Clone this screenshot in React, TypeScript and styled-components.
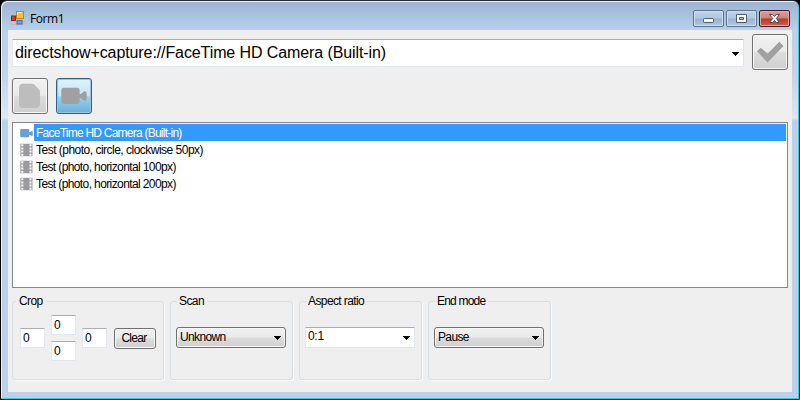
import React from "react";
import styled, { createGlobalStyle, css } from "styled-components";

const Global = createGlobalStyle`
  *, *::before, *::after { box-sizing: border-box; }
  html, body { margin: 0; padding: 0; background: #000; }
  body { overflow: hidden; }
  button, input { font: inherit; color: inherit; margin: 0; letter-spacing: inherit; }
`;

const Window = styled.div`
  width: 800px;
  height: 400px;
  display: flex;
  flex-direction: column;
  padding: 1px 6px 6px;
  border: 1px solid #000;
  border-top-color: #2b2a31;
  border-radius: 7px 7px 0 0;
  box-shadow: inset -1px -1px 0 #2bd0ee, inset 1px 1px 0 #e9f1fa;
  background:
    linear-gradient(to bottom, #9ab4d1 0, #a9c3df 15px, #b9d1ea 30px, #bfd5ec 75px, #dbe8f5 117px, #b9d1ea 120px);
  font: 12px/13px "Liberation Sans", Arial, sans-serif;
  letter-spacing: -0.7px;
  color: #000;
`;

const TitleBar = styled.header`
  height: 28px;
  flex: none;
  display: flex;
  align-items: flex-start;
  padding: 8px 3px 0 4px;
`;

const AppIcon = styled.svg`
  width: 14px;
  height: 14px;
  margin-top: 1px;
`;

const Title = styled.h1`
  margin: 1px auto 0 5px;
  font: 12px/15px "Open Sans", sans-serif;
  letter-spacing: -0.4px;
`;

const CaptionButtons = styled.div`
  display: flex;
  gap: 2px;
`;

const CaptionButton = styled.button<{ $danger?: boolean }>`
  width: 31px;
  height: 17px;
  padding: 0;
  display: grid;
  place-items: center;
  border: 1px solid ${(p) => (p.$danger ? "#4b1722" : "#5c738f")};
  border-radius: 2px;
  box-shadow: inset 0 0 0 1px ${(p) => (p.$danger ? "#e5aaa3" : "#d0dfef")};
  background: ${(p) =>
    p.$danger
      ? "linear-gradient(#dda097 0, #cf8276 7px, #b93a26 8px, #ca6250 100%)"
      : "linear-gradient(#bfd2e7 0, #b1c8e0 7px, #98b3d1 8px, #b0c9e4 100%)"};
  svg { display: block; }
`;

const Client = styled.main`
  flex: 1;
  min-height: 0;
  display: flex;
  flex-direction: column;
  padding: 4px 4px 0;
  margin: 0 1px 1px;
  background: #efefef;
`;

const SourceBar = styled.div`
  display: flex;
  justify-content: space-between;
  align-items: flex-start;
  height: 44px;
`;

const fieldEdge = css`
  border: 1px solid #e2e7ef;
  border-top-color: #abadb3;
  border-radius: 1px;
  background: #fff;
`;

const buttonFace = css`
  border: 1px solid #707070;
  border-radius: 3px;
  box-shadow: inset 0 0 0 1px #f8f8f8;
  background: linear-gradient(#f1f1f1 0, #eaeaea 48%, #dcdcdc 52%, #cfcfcf 100%);
`;

const Combo = styled.div<{ $kind: "source" | "edit" | "list" }>`
  display: flex;
  align-items: center;
  justify-content: space-between;
  ${(p) => (p.$kind === "list" ? buttonFace : fieldEdge)}
  ${(p) =>
    p.$kind === "source"
      ? css`
          width: 732px;
          height: 28px;
          margin-top: 5px;
          padding: 0 4px 0 2px;
          font-size: 16px;
          line-height: 20px;
          letter-spacing: -0.1px;
        `
      : css`
          width: 110px;
          height: 21px;
          padding: ${p.$kind === "list" ? "0 4px 0 3px" : "0 4px 2px 2px"};
          letter-spacing: ${p.$kind === "list" ? "-0.65px" : "-0.3px"};
        `}
`;

const Arrow = styled.svg<{ $drop?: number }>`
  width: 7px;
  height: 4px;
  flex: none;
  fill: #000;
  margin-top: ${(p) => p.$drop ?? 0}px;
`;

const ToolButton = styled.button<{ $active?: boolean }>`
  width: 36px;
  height: 36px;
  padding: 0;
  flex: none;
  ${buttonFace}
  ${(p) =>
    p.$active &&
    css`
      border-color: #2c628b;
      box-shadow: inset 0 0 0 1px #9cc3d9;
      background: linear-gradient(#e3f2fa 0, #c5e4f4 50%, #98d1ef 52%, #69b2d8 100%);
    `}
  svg { display: block; }
`;

const Tools = styled.div`
  display: flex;
  gap: 8px;
  height: 44px;
`;

const List = styled.ul`
  height: 166px;
  flex: none;
  margin: 0;
  padding: 1px 1px 0 7px;
  list-style: none;
  border: 1px solid #828790;
  background: #fff;
`;

const Item = styled.li`
  display: flex;
  align-items: center;
  height: 17px;
  svg { flex: none; }
`;

const ItemText = styled.span<{ $selected?: boolean; $tracking: number }>`
  padding: 3px 0 1px 2px;
  letter-spacing: ${(p) => p.$tracking}px;
  ${(p) =>
    p.$selected &&
    css`
      flex: 1;
      background: #3399ff;
      color: #fff;
    `}
`;

const Groups = styled.div`
  display: flex;
  gap: 6px;
  margin-top: 7px;
`;

const Group = styled.fieldset<{ $w: number }>`
  width: ${(p) => p.$w}px;
  height: 85px;
  min-width: 0;
  margin: 0;
  padding: 0 0 0 5px;
  border: 1px solid #d5dfe5;
  border-radius: 3px;
  box-shadow: 1px 1px 0 #fafafa;
  &:first-child { padding-left: 7px; }
`;

const Legend = styled.legend<{ $tracking?: number }>`
  margin-left: 1px;
  padding: 0 3px 0 2px;
  letter-spacing: ${(p) => p.$tracking ?? -0.6}px;
  ${Group}:first-child & { margin-left: -3px; }
`;

const ComboSlot = styled.div`
  padding-top: 19px;
`;

const CropGrid = styled.div`
  display: grid;
  grid-template-columns: 25px 25px 25px 42px;
  grid-template-rows: 20px 20px;
  gap: 6px;
  align-items: center;
  padding-top: 7px;
`;

const CropInput = styled.input<{ $col: number; $row: string }>`
  width: 25px;
  height: 20px;
  padding: 0 0 1px 2px;
  outline: none;
  grid-column: ${(p) => p.$col};
  grid-row: ${(p) => p.$row};
  ${fieldEdge}
`;

const ClearButton = styled.button`
  grid-column: 4;
  grid-row: 1 / 3;
  width: 42px;
  height: 21px;
  margin-left: 1px;
  padding: 0 2px 0 0;
  ${buttonFace}
`;

const DropArrow = ({ drop }: { drop?: number }) => (
  <Arrow viewBox="0 0 7 4" $drop={drop} shapeRendering="crispEdges">
    <path d="M0 0h7v1H6v1H5v1H4v1H3V3H2V2H1V1H0z" />
  </Arrow>
);

const FilmIcon = () => (
  <svg width="14" height="14" viewBox="0 0 14 14">
    <path
      fill="#9b9b9f"
      fillRule="evenodd"
      d="M.3.800h12.200v12.400H.3zM1.300 1.300v2h2v-2zM1.300 4.500v2h2v-2zM1.300 7.500v2h2v-2zM1.300 10.700v2h2v-2zM9.500 1.300v2h2v-2zM9.500 4.500v2h2v-2zM9.500 7.500v2h2v-2zM9.500 10.700v2h2v-2z"
    />
  </svg>
);

const SmallCamera = () => (
  <svg width="14" height="14" viewBox="0 0 14 14">
    <path fill="#66a0d9" d="M1.200 3h7q1 0 1 1v2h1l1.300-1h1.200v5h-1.200L10.200 9h-1v1.300q0 1-1 1h-7q-1 0-1-1V4q0-1 1-1z" />
  </svg>
);

const films = [
  { label: "Test (photo, circle, clockwise 50px)", tracking: -0.51 },
  { label: "Test (photo, horizontal 100px)", tracking: -0.61 },
  { label: "Test (photo, horizontal 200px)", tracking: -0.61 },
];

export default function App() {
  return (
    <>
      <Global />
      <Window>
        <TitleBar>
          <AppIcon viewBox="0 0 14 14">
            <path d="M.5.5h6v4M.5 5v8.500h5M5 9.500V13.500h8V9.500" fill="none" stroke="#bdb8b8" />
            <rect x="5.500" y=".5" width="7" height="7" fill="#f5c033" stroke="#b38622" />
            <path d="M6.500 4V1.500H11" fill="none" stroke="#ffe9a0" />
            <rect x=".5" y="5" width="4" height="4.500" fill="#d93a25" stroke="#a01b13" />
            <rect x="6" y="9.500" width="5" height="3.500" fill="#6ba0f5" stroke="#3669cd" />
          </AppIcon>
          <Title>Form1</Title>
          <CaptionButtons>
            <CaptionButton aria-label="Minimize">
              <svg width="29" height="15" viewBox="0 0 29 15">
                <rect x="9.500" y="7.500" width="10" height="4" rx=".7" fill="#f5f5f5" stroke="#535d6c" />
              </svg>
            </CaptionButton>
            <CaptionButton aria-label="Maximize">
              <svg width="29" height="15" viewBox="0 0 29 15">
                <path fill="#f5f5f5" stroke="#535d6c" fillRule="evenodd" d="M9.500 3.500h10v8h-10zM12.500 6.500v2h4v-2z" />
              </svg>
            </CaptionButton>
            <CaptionButton $danger aria-label="Close">
              <svg width="29" height="15" viewBox="0 0 29 15">
                <path
                  fill="#f8f8f8"
                  stroke="#4c4c5c"
                  strokeLinejoin="round"
                  d="M9.500 3.500h3.200l1.800 2 1.800-2h3.200l-3.200 4 3.200 4h-3.200l-1.800-2-1.800 2H9.500l3.200-4z"
                />
              </svg>
            </CaptionButton>
          </CaptionButtons>
        </TitleBar>
        <Client>
          <SourceBar>
            <Combo $kind="source">
              directshow+capture://FaceTime HD Camera (Built-in)
              <DropArrow drop={2} />
            </Combo>
            <ToolButton aria-label="Apply">
              <svg width="34" height="34" viewBox="0 0 34 34">
                <path fill="#a0a0a0" d="M4 16.300 7.700 12.700l6.900 6L26.300 6.700l4.200 4.200L14.500 27.500z" />
              </svg>
            </ToolButton>
          </SourceBar>
          <Tools>
            <ToolButton aria-label="File">
              <svg width="34" height="34" viewBox="0 0 34 34">
                <path fill="#bdbdbd" d="M10 4.800h9q1.500 0 2.500 1L26 10.500q1 1 1 2.500v12q0 4-4 4H10q-4 0-4-4V8.800q0-4 4-4z" />
              </svg>
            </ToolButton>
            <ToolButton $active aria-label="Camera">
              <svg width="34" height="34" viewBox="0 0 34 34">
                <path fill="#a0a0a0" d="M6.700 8.700h13.500q2.400 0 2.400 2.400v4h1.200l2.700-2.400q1-.7 1.800-.4 1.400.4 1.400 2v5.400q0 1.600-1.400 2-.8.3-1.800-.4l-2.700-2.300h-1.200v3.600q0 2.400-2.400 2.400H6.700q-2.400 0-2.400-2.400V11.100q0-2.400 2.400-2.400z" />
              </svg>
            </ToolButton>
          </Tools>
          <List>
            <Item>
              <SmallCamera />
              <ItemText $selected $tracking={-0.76}>FaceTime HD Camera (Built-in)</ItemText>
            </Item>
            {films.map((f) => (
              <Item key={f.label}>
                <FilmIcon />
                <ItemText $tracking={f.tracking}>{f.label}</ItemText>
              </Item>
            ))}
          </List>
          <Groups>
            <Group $w={152}>
              <Legend>Crop</Legend>
              <CropGrid>
                <CropInput $col={1} $row="1 / 3" defaultValue="0" />
                <CropInput $col={2} $row="1" defaultValue="0" />
                <CropInput $col={2} $row="2" defaultValue="0" />
                <CropInput $col={3} $row="1 / 3" defaultValue="0" />
                <ClearButton>Clear</ClearButton>
              </CropGrid>
            </Group>
            <Group $w={123}>
              <Legend>Scan</Legend>
              <ComboSlot>
                <Combo $kind="list">Unknown<DropArrow /></Combo>
              </ComboSlot>
            </Group>
            <Group $w={123}>
              <Legend>Aspect ratio</Legend>
              <ComboSlot>
                <Combo $kind="edit">0:1<DropArrow drop={2} /></Combo>
              </ComboSlot>
            </Group>
            <Group $w={123}>
              <Legend $tracking={-0.8}>End mode</Legend>
              <ComboSlot>
                <Combo $kind="list">Pause<DropArrow /></Combo>
              </ComboSlot>
            </Group>
          </Groups>
        </Client>
      </Window>
    </>
  );
}
